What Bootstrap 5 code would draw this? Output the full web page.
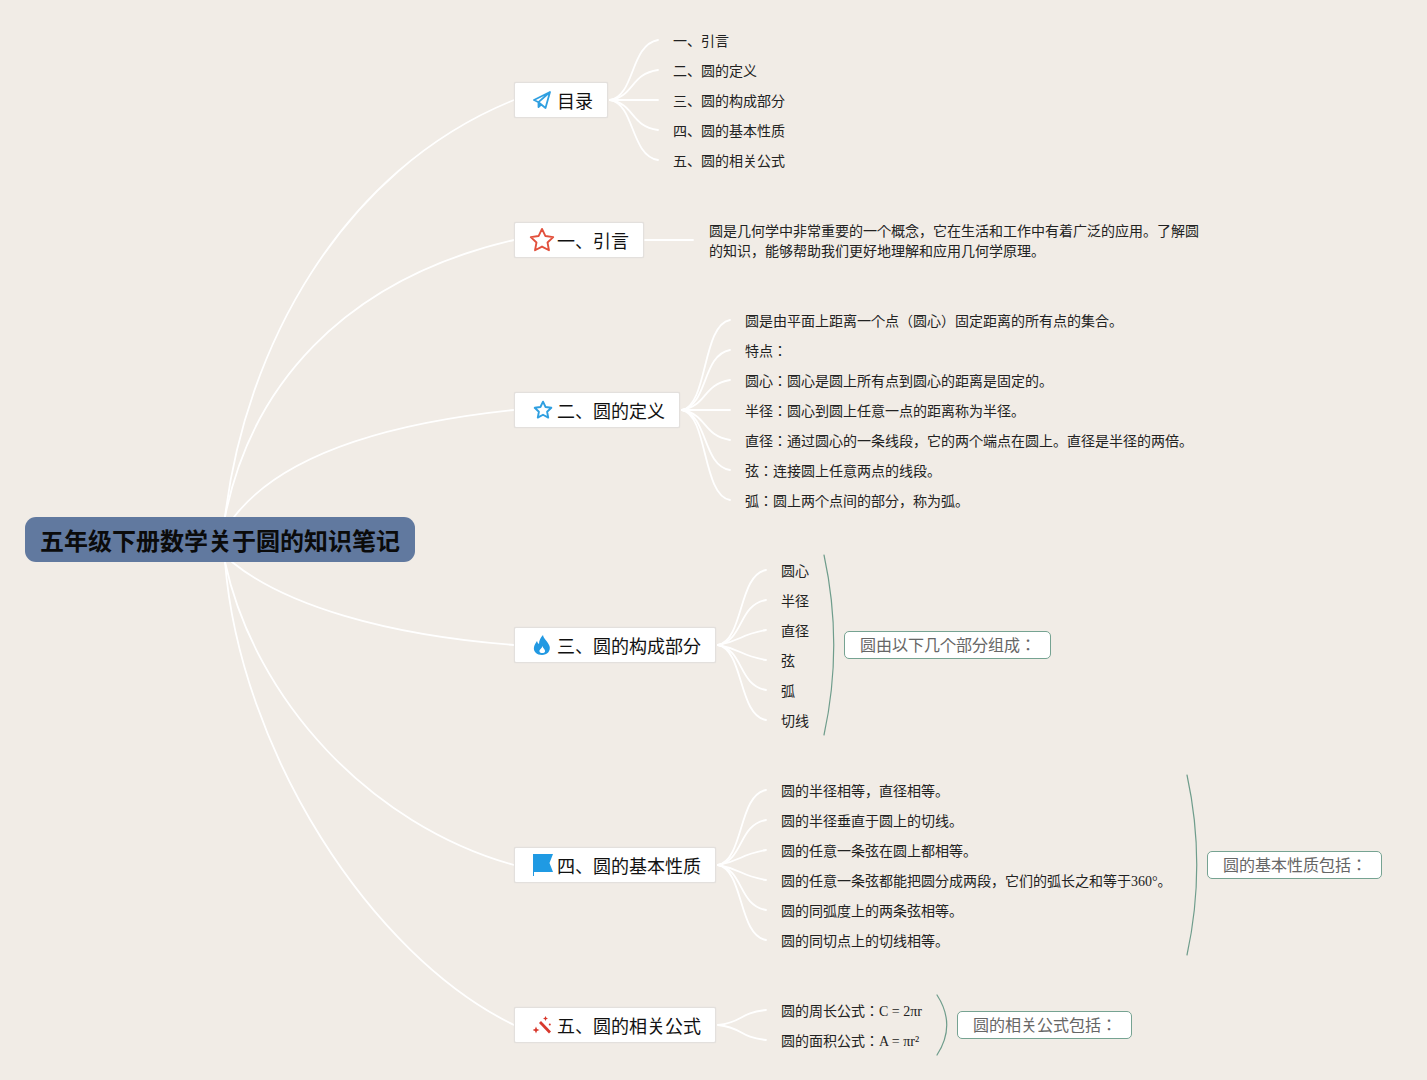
<!DOCTYPE html>
<html>
<head>
<meta charset="utf-8">
<title>五年级下册数学关于圆的知识笔记</title>
<link href="https://cdn.jsdelivr.net/npm/bootstrap@5.3.0/dist/css/bootstrap.min.css" rel="stylesheet">
<style>
html,body{margin:0;background:#f1ece6;overflow:hidden}
body{font-family:"Liberation Serif","Noto Sans CJK JP",serif;color:#222}
.mind-canvas{position:relative;width:1427px;height:1080px;background:#f1ece6}
.wires{position:absolute;left:0;top:0}
.wires path{fill:none;stroke:#fff;stroke-width:1.8;stroke-linecap:round}
.wires path.brace{stroke:#6f9d8c;stroke-width:1.2}
.root-node{position:absolute;left:25px;top:517px;width:390px;height:45px;background:#61799f;border-radius:11px;font-size:24px;font-weight:700;color:#0b0b0b;padding-left:15px;line-height:51px;white-space:nowrap}
.topic-node{position:absolute;left:514px;height:36px;background:#fff;border:1px solid #e3e0dd;border-radius:2px;box-shadow:0 0 1px #d8d4d0;font-size:18px;color:#111;white-space:nowrap;padding-left:18px}
.topic-node svg{flex:none;margin-right:6px}
.topic-node span{padding-top:4px}
.topic-node svg.icon-wide{margin-right:4px}
.t-toc{top:82px;width:94px}
.t-one{top:222px;width:130px;padding-left:14px}
.topic-node.t-one svg{margin-right:2px}
.t-two{top:392px;width:166px}
.t-three{top:627px;width:202px}
.t-four{top:847px;width:202px}
.t-five{top:1007px;width:202px}
.leaf-group{position:absolute;font-size:14px;color:#222;white-space:nowrap}
.leaf-row{height:30px;line-height:30px}
.g-toc{left:673px;top:27px}
.g-two{left:745px;top:307px}
.g-three{left:781px;top:557px}
.g-four{left:781px;top:777px}
.g-five{left:781px;top:997px}
.intro-text{position:absolute;left:709px;top:222px;width:496px;font-size:14px;line-height:20px;color:#222}
.summary-node{position:absolute;height:28px;background:#fff;border:1px solid #76a392;border-radius:5px;font-size:16px;color:#666;line-height:28px;padding-left:15px;white-space:nowrap}
.s-three{left:844px;top:631px;width:207px}
.s-four{left:1207px;top:851px;width:175px}
.s-five{left:957px;top:1011px;width:175px}
</style>
</head>
<body>
<main class="mind-canvas">
<svg class="wires" width="1427" height="1080" viewBox="0 0 1427 1080" aria-hidden="true">
  <path d="M225 517C245 350 340 170 514 100"/>
  <path d="M225 517C250 390 340 280 514 240"/>
  <path d="M234 517C278 460 370 425 514 410"/>
  <path d="M232 562C285 605 385 635 514 645"/>
  <path d="M225 562C255 700 370 825 514 865"/>
  <path d="M225 562C240 750 370 955 514 1025"/>

  <path d="M610 100C635 96 630 45 658 40"/>
  <path d="M610 100C635 96 630 74 658 70"/>
  <path d="M610 100H658"/>
  <path d="M610 100C635 104 630 126 658 130"/>
  <path d="M610 100C635 104 630 155 658 160"/>

  <path d="M645 240H693"/>

  <path d="M682 410C708 405 702 325 730 320"/>
  <path d="M682 410C708 405 702 355 730 350"/>
  <path d="M682 410C708 405 702 385 730 380"/>
  <path d="M682 410H730"/>
  <path d="M682 410C708 415 702 435 730 440"/>
  <path d="M682 410C708 415 702 465 730 470"/>
  <path d="M682 410C708 415 702 495 730 500"/>

  <path d="M718 645C744 640 738 575 766 570"/>
  <path d="M718 645C744 640 738 605 766 600"/>
  <path d="M718 645C744 640 738 635 766 630"/>
  <path d="M718 645C744 650 738 655 766 660"/>
  <path d="M718 645C744 650 738 685 766 690"/>
  <path d="M718 645C744 650 738 715 766 720"/>

  <path d="M718 865C744 860 738 795 766 790"/>
  <path d="M718 865C744 860 738 825 766 820"/>
  <path d="M718 865C744 860 738 855 766 850"/>
  <path d="M718 865C744 870 738 875 766 880"/>
  <path d="M718 865C744 870 738 905 766 910"/>
  <path d="M718 865C744 870 738 935 766 940"/>

  <path d="M718 1025C744 1022 738 1013 766 1010"/>
  <path d="M718 1025C744 1028 738 1037 766 1040"/>

  <path class="brace" d="M824 555C837 615 837 675 824 735"/>
  <path class="brace" d="M1187 775C1200 835 1200 895 1187 955"/>
  <path class="brace" d="M937 995C950 1015 950 1035 937 1055"/>
</svg>

<div class="root-node">五年级下册数学关于圆的知识笔记</div>

<div class="topic-node t-toc d-flex align-items-center">
  <svg width="18" height="18" viewBox="0 0 18 18" fill="none" stroke="#2f9fe0" stroke-width="1.8" stroke-linejoin="round"><path d="M17 1 1 9l4.500 2.200L17 1l-4.500 16-7-5.800V16l3-2.700"/></svg>
  <span>目录</span>
</div>
<div class="topic-node t-one d-flex align-items-center">
  <svg width="26" height="26" viewBox="0 0 25 25" fill="none" stroke="#e2503c" stroke-width="1.800" stroke-linejoin="round"><path d="m12.500 1.800 3.300 6.900 7.500 1-5.500 5.200 1.400 7.500-6.700-3.600-6.700 3.600 1.400-7.500-5.500-5.200 7.500-1z"/></svg>
  <span>一、引言</span>
</div>
<div class="topic-node t-two d-flex align-items-center">
  <svg class="icon-wide" width="20" height="20" viewBox="0 0 18 18" fill="none" stroke="#2f9fe0" stroke-width="1.700" stroke-linejoin="round"><path d="m9 1.500 2.300 4.800 5.200.7-3.800 3.600 1 5.200L9 13.300l-4.700 2.500 1-5.200L1.500 7l5.200-.7z"/></svg>
  <span>二、圆的定义</span>
</div>
<div class="topic-node t-three d-flex align-items-center">
  <svg width="18" height="20" viewBox="0 0 18 20" fill="#2299e2"><path fill-rule="evenodd" d="M10 0c.5 4 5 6.500 6.500 11 1.500 5-2.500 9-7.500 9s-9-3.500-8-8c.5-2.500 2-4.500 3-6 .5 1.500 1 2.500 2 3 0-3.500 1.500-6.500 4-9Zm-.5 11c-.5 2.500-3.500 3.500-3 5.500.5 2 5 2 5.500 0 .5-2-2-3-2.500-5.500Z"/></svg>
  <span>三、圆的构成部分</span>
</div>
<div class="topic-node t-four d-flex align-items-center">
  <svg class="icon-wide" width="20" height="22" viewBox="0 0 20 22"><path d="M0 0h1v22H0z" fill="#2299e2"/><path d="M1 0h19l-3.500 9 3.500 9H1z" fill="#1f9ae3"/></svg>
  <span>四、圆的基本性质</span>
</div>
<div class="topic-node t-five d-flex align-items-center">
  <svg width="18" height="18" viewBox="0 0 18 18" fill="#d8382c"><path d="m6 7 2-2L18 15.500 16 17.500z"/><path d="m3 10.500 1 2.500 2.500 1-2.500 1-1 2.500-1-2.500-2.500-1 2.500-1z"/><path d="m12.500 0 .8 1.700 1.700.8-1.700.8-.8 1.700-.8-1.700L10 2.500l1.700-.8z"/><circle cx="16.800" cy="8.500" r="1"/></svg>
  <span>五、圆的相关公式</span>
</div>

<div class="leaf-group g-toc">
  <div class="leaf-row">一、引言</div>
  <div class="leaf-row">二、圆的定义</div>
  <div class="leaf-row">三、圆的构成部分</div>
  <div class="leaf-row">四、圆的基本性质</div>
  <div class="leaf-row">五、圆的相关公式</div>
</div>

<div class="intro-text">圆是几何学中非常重要的一个概念，它在生活和工作中有着广泛的应用。了解圆的知识，能够帮助我们更好地理解和应用几何学原理。</div>

<div class="leaf-group g-two">
  <div class="leaf-row">圆是由平面上距离一个点（圆心）固定距离的所有点的集合。</div>
  <div class="leaf-row">特点：</div>
  <div class="leaf-row">圆心：圆心是圆上所有点到圆心的距离是固定的。</div>
  <div class="leaf-row">半径：圆心到圆上任意一点的距离称为半径。</div>
  <div class="leaf-row">直径：通过圆心的一条线段，它的两个端点在圆上。直径是半径的两倍。</div>
  <div class="leaf-row">弦：连接圆上任意两点的线段。</div>
  <div class="leaf-row">弧：圆上两个点间的部分，称为弧。</div>
</div>

<div class="leaf-group g-three">
  <div class="leaf-row">圆心</div>
  <div class="leaf-row">半径</div>
  <div class="leaf-row">直径</div>
  <div class="leaf-row">弦</div>
  <div class="leaf-row">弧</div>
  <div class="leaf-row">切线</div>
</div>
<div class="summary-node s-three">圆由以下几个部分组成：</div>

<div class="leaf-group g-four">
  <div class="leaf-row">圆的半径相等，直径相等。</div>
  <div class="leaf-row">圆的半径垂直于圆上的切线。</div>
  <div class="leaf-row">圆的任意一条弦在圆上都相等。</div>
  <div class="leaf-row">圆的任意一条弦都能把圆分成两段，它们的弧长之和等于360°。</div>
  <div class="leaf-row">圆的同弧度上的两条弦相等。</div>
  <div class="leaf-row">圆的同切点上的切线相等。</div>
</div>
<div class="summary-node s-four">圆的基本性质包括：</div>

<div class="leaf-group g-five">
  <div class="leaf-row">圆的周长公式：C = 2πr</div>
  <div class="leaf-row">圆的面积公式：A = πr²</div>
</div>
<div class="summary-node s-five">圆的相关公式包括：</div>
</main>
<script src="https://cdn.jsdelivr.net/npm/bootstrap@5.3.0/dist/js/bootstrap.bundle.min.js"></script>
</body>
</html>
